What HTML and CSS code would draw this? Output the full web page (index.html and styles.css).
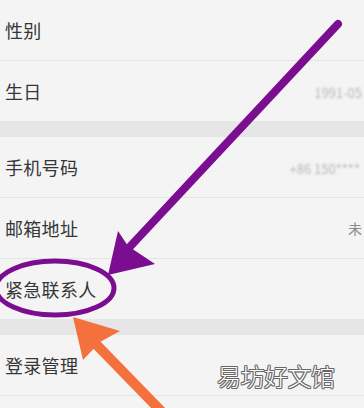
FILE: index.html
```html
<!DOCTYPE html>
<html lang="zh-CN">
<head>
<meta charset="utf-8">
<title>个人资料</title>
<link rel="stylesheet" href="styles.css">
</head>
<body>
<div class="page">
  <section class="group">
    <div class="row"><span class="label">性别</span></div>
    <div class="row"><span class="label">生日</span><span class="value v-birth">1991-05</span></div>
  </section>
  <section class="group">
    <div class="row"><span class="label">手机号码</span><span class="value v-phone">+86 150****</span></div>
    <div class="row"><span class="label">邮箱地址</span><span class="value v-mail">未</span></div>
    <div class="row"><span class="label">紧急联系人</span></div>
  </section>
  <section class="group group-last">
    <div class="row"><span class="label">登录管理</span></div>
  </section>

  <svg class="marks" width="364" height="408" viewBox="0 0 364 408">
    <ellipse cx="55" cy="288" rx="59" ry="27" fill="none" stroke="#7b0e90" stroke-width="5"/>
    <line x1="338" y1="24" x2="125" y2="252" stroke="#7b0e90" stroke-width="8" stroke-linecap="round"/>
    <polygon points="108,275 118,231 128,246 155,264" fill="#7b0e90"/>
    <line x1="162" y1="412" x2="90" y2="338" stroke="#f4703c" stroke-width="10"/>
    <polygon points="73,317 120,331 100,342 83,360" fill="#f4703c"/>
  </svg>

  <div class="watermark">易坊好文馆</div>
</div>
</body>
</html>
```
FILE: styles.css
```css
html, body {
  margin: 0;
  padding: 0;
  background: #f4f4f4;
  overflow: hidden;
}
.page {
  position: relative;
  width: 364px;
  height: 408px;
  font-family: "Noto Sans CJK SC", "Noto Sans", sans-serif;
  display: flex;
  flex-direction: column;
  gap: 16px;
  background: #e6e6e6;
  overflow: hidden;
}
.group {
  background: #f4f4f4;
  display: flex;
  flex-direction: column;
}
.group-last {
  flex: 1;
}
.row {
  height: 60px;
  display: flex;
  align-items: center;
  padding-left: 5px;
  padding-right: 2px;
  border-bottom: 1px solid #e4e4e4;
  box-sizing: content-box;
  white-space: nowrap;
}
.group:nth-child(1) .row:last-child,
.group:nth-child(2) .row:last-child {
  border-bottom: none;
}
.label {
  font-size: 18px;
  color: #363636;
  letter-spacing: 0.3px;
}
.value {
  margin-left: auto;
  font-size: 13px;
  color: #b8b8b8;
  filter: blur(1px);
  white-space: nowrap;
}
.v-birth { margin-top: 2px; }
.v-phone { margin-top: 2px; margin-right: 2px; }
.v-mail { font-size: 14px; filter: none; color: #8a8a8a; margin-right: 0; }
.marks {
  position: absolute;
  left: 0;
  top: 0;
}
.watermark {
  position: absolute;
  left: 217px;
  top: 358px;
  font-size: 24px;
  font-family: "Noto Sans CJK SC", sans-serif;
  font-weight: 300;
  color: #ffffff;
  letter-spacing: -0.5px;
  text-shadow: 1px 0 0 #666, -1px 0 0 #666, 0 1px 0 #666, 0 -1px 0 #666,
    0.7px 0.7px 0 #666, -0.7px -0.7px 0 #666, 0.7px -0.7px 0 #666, -0.7px 0.7px 0 #666;
}
```
